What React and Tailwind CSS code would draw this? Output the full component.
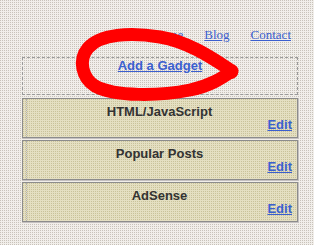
const gadgets = ['HTML/JavaScript', 'Popular Posts', 'AdSense'];

const GadgetBox = ({ title }) => (
  <div className="mb-[2px] h-[40px] border border-[#8c8c8c] bg-[#e4dfc2] bg-[conic-gradient(#e4dfc2_0_75%,#c9c29a_0)] bg-[length:2px_2px] pl-[3px] shadow-[1px_1px_0_#c4c0c0]">
    <div className="h-full border-l border-dotted border-[#b0b0b0] pt-[6px] pr-[5px] font-['Liberation_Sans',Arial,sans-serif] text-[13px] leading-[13px] font-bold">
      <div className="text-center text-[#333333]">{title}</div>
      <div className="text-right">
        <a href="#" className="text-[#3b5fcf] underline">Edit</a>
      </div>
    </div>
  </div>
);

export default function App() {
  return (
    <div className="relative h-[245px] w-[314px] overflow-hidden bg-[#f1eeea] bg-[conic-gradient(#f1eeea_0_75%,#c8c2ba_0)] bg-[length:2px_2px] pt-[27px]">
      <div className="ml-[22px] w-[276px]">
        {/* nav links */}
        <div className="flex justify-end gap-[21px] pr-[7px] font-['Liberation_Serif','Times_New_Roman',serif] text-[13px] leading-[16px]">
          <a href="#" className="text-[#3b5fcf] underline">Home</a>
          <a href="#" className="text-[#3b5fcf] underline">Blog</a>
          <a href="#" className="text-[#3b5fcf] underline">Contact</a>
        </div>

        {/* add gadget */}
        <div className="mt-[14px] h-[38px] border border-dashed border-[#9a9a9a] text-center font-['Liberation_Sans',Arial,sans-serif] text-[13px] leading-[16px] font-bold">
          <a href="#" className="text-[#3b5fcf] underline">Add a Gadget</a>
        </div>

        <div className="mt-[3px]">
          {gadgets.map((g) => (
            <GadgetBox key={g} title={g} />
          ))}
        </div>
      </div>

      {/* red marker scribble */}
      <svg className="pointer-events-none absolute left-0 top-0" width="314" height="245" viewBox="0 0 314 245">
        <path
          d="M 232 71 C 215 60, 190 42, 160 37 C 130 32, 100 34, 88 48 C 78 60, 82 78, 95 86 C 115 97, 160 96, 190 90 C 210 86, 222 78, 232 71 Z"
          fill="none"
          stroke="#ff0000"
          strokeWidth="13"
          strokeLinejoin="round"
        />
        <circle cx="231" cy="72" r="7" fill="#ff0000" />
      </svg>
    </div>
  );
}
